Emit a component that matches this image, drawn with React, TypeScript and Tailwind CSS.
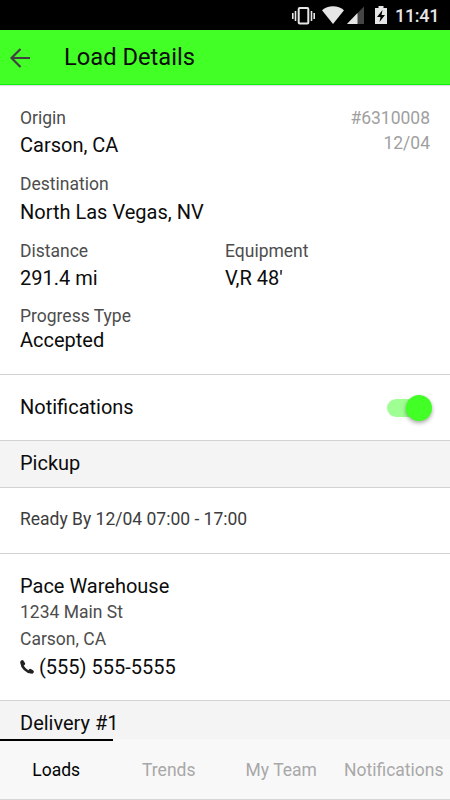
import type { ReactNode } from "react";

type FieldProps = {
  label: string;
  value: string;
  gap?: string;
};

const TABS = [
  { name: "Loads", active: true },
  { name: "Trends", active: false },
  { name: "My Team", active: false },
  { name: "Notifications", active: false },
];

const StatusBar = () => (
  <div className="flex h-[30px] shrink-0 items-center bg-black pl-[292px] text-[#e6e6e6]">
    {/* Vibrate */}
    <svg className="mt-px h-5 w-6" viewBox="0 0 24 20" fill="currentColor">
      <path d="M0 7h1.6v6H0zM2.7 5h1.6v10H2.7zM21.4 7H23v6h-1.6zM18.7 5h1.6v10h-1.6z" />
      <rect x="6.7" y="2" width="9.6" height="15.6" rx="1" fill="none" stroke="currentColor" strokeWidth="2" />
    </svg>
    {/* Wifi */}
    <svg className="ml-[6px] h-5 w-[22px]" viewBox="0 0 22 20" fill="currentColor">
      <path d="M11 19 0 5.2C3 2.6 6.8 1.2 11 1.2S19 2.6 22 5.2z" />
    </svg>
    {/* Signal */}
    <svg className="ml-[3px] h-5 w-[17px]" viewBox="0 0 17 20">
      <path d="M17 1.5V19H0z" fill="#454545" />
      <path d="M10.5 8V19H0z" fill="currentColor" />
    </svg>
    {/* Battery */}
    <svg className="ml-[11px] h-5 w-3" viewBox="0 0 12 20">
      <path d="M3.5 1h5v2H12v16H0V3h3.5z" fill="currentColor" />
      <path d="M7.5 5 2 12h3.5L4.5 17 10 10H6.5z" fill="#000" />
    </svg>
    <span className="ml-2 pt-[2px] text-[18px] leading-[28px] font-medium tracking-[-0.3px]">11:41</span>
  </div>
);

const Header = () => (
  <header className="z-10 flex h-[55px] shrink-0 items-center border-b border-[#12ee12] bg-[#42ff25] pl-[10px] shadow-[0_1px_1px_rgba(0,0,0,0.12)]">
    <svg className="mt-px h-5 w-5 text-[#414141]" viewBox="0 0 20 20" fill="none" stroke="currentColor" strokeWidth="2.2">
      <path d="M20 10H1.5M10.5 1 1.5 10l9 9" />
    </svg>
    <h1 className="ml-[34px] text-[23.7px] leading-[30px]">Load Details</h1>
  </header>
);

const Field = ({ label, value, gap = "mt-[3px]" }: FieldProps) => (
  <div>
    <div className="text-[17.5px] leading-6 text-[#4d4d4d]">{label}</div>
    <div className={`text-[20px] leading-6 ${gap}`}>{value}</div>
  </div>
);

const SectionTitle = ({ children }: { children: ReactNode }) => (
  <h2 className="h-[46px] shrink-0 bg-[#f4f4f4] pt-[10px] pl-5 text-[20px] leading-6">
    {children}
  </h2>
);

const Toggle = () => (
  <div className="relative h-[18px] w-[45px]">
    <div className="h-[18px] w-[40px] rounded-full bg-[#9fff92]" />
    <div className="absolute -top-1 left-[19px] h-[26px] w-[26px] rounded-full bg-[#42ff25] shadow-[0_2px_4px_rgba(0,0,0,0.35)]" />
  </div>
);

const Divider = () => <div className="h-px shrink-0 bg-[#d2d2d2]" />;

const TabBar = () => (
  <nav className="flex h-[61px] shrink-0 border-b border-[#d6d6d6] bg-[#f8f8f8] text-[17.5px]">
    {TABS.map((tab) => (
      <div
        key={tab.name}
        className={`flex w-[112.5px] justify-center border-t-2 pt-[17px] leading-6 ${
          tab.active
            ? "border-black text-black"
            : "border-transparent text-[#a8a8a8]"
        }`}
      >
        {tab.name}
      </div>
    ))}
  </nav>
);

const App = () => {
  return (
    <div className="flex h-[800px] w-[450px] flex-col overflow-hidden bg-white font-['Roboto',sans-serif] text-[#0c0c0c]">
      <StatusBar />
      <Header />

      <main className="flex min-h-0 flex-1 flex-col overflow-hidden">
        {/* Load summary */}
        <section className="h-[289px] shrink-0 px-5 pt-[21px]">
          <div className="flex justify-between">
            <Field label="Origin" value="Carson, CA" />
            <div className="text-right text-[17.5px] leading-[25px] text-[#a0a0a0]">
              <div>#6310008</div>
              <div>12/04</div>
            </div>
          </div>
          <div className="mt-[15px]">
            <Field label="Destination" value="North Las Vegas, NV" gap="mt-1" />
          </div>
          <div className="mt-[15px] grid grid-cols-2">
            <Field label="Distance" value="291.4 mi" />
            <Field label="Equipment" value="V,R 48'" />
          </div>
          <div className="mt-[14px]">
            <Field label="Progress Type" value="Accepted" gap="mt-0" />
          </div>
        </section>

        <Divider />
        <div className="flex h-[65px] shrink-0 items-center justify-between pr-[18px] pl-5 text-[20px]">
          <span className="pb-[2px]">Notifications</span>
          <Toggle />
        </div>
        <Divider />

        <SectionTitle>Pickup</SectionTitle>
        <Divider />
        <div className="h-[65px] shrink-0 pt-[19px] pl-5 text-[17.5px] leading-6 text-[#3c3c3c]">
          Ready By 12/04 07:00 - 17:00
        </div>
        <Divider />

        <section className="h-[146px] shrink-0 pt-5 pl-5">
          <div className="text-[20px] leading-6">Pace Warehouse</div>
          <div className="mt-px mb-px text-[17.5px] leading-[27px] text-[#4d4d4d]">
            <div>1234 Main St</div>
            <div>Carson, CA</div>
          </div>
          <div className="flex items-center text-[20px] leading-[27px]">
            <svg className="mr-[5px] mb-[2px] h-[14px] w-[14px]" viewBox="0 0 14 14" fill="none" stroke="#222" strokeLinecap="round">
              <path d="M1.7 3C2 7.3 6.5 12 11 12.2" strokeWidth="2.8" />
              <path d="M2.2 2 3.3 3.7M10.3 10.7 12 11.8" strokeWidth="3.6" />
            </svg>
            <span>(555) 555-5555</span>
          </div>
        </section>
        <Divider />

        <SectionTitle>Delivery #1</SectionTitle>
      </main>

      <TabBar />
    </div>
  );
};

export default App;
